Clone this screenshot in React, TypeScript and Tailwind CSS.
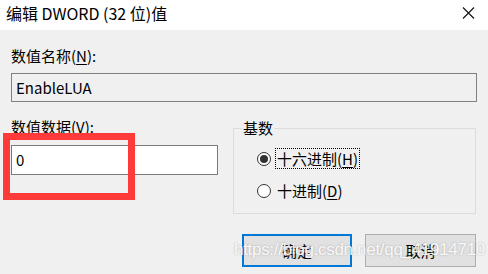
import React from "react";

const font = { fontFamily: '"Noto Sans CJK SC", "Noto Sans", sans-serif' };

export default function App() {
  return (
    <div
      className="relative w-[488px] h-[274px] overflow-hidden bg-[#f0f0f0] text-black font-['Noto_Sans_CJK_SC','Noto_Sans',sans-serif]"
    >
      {/* Title bar */}
      <div className="h-[30px] bg-white">
        <div className="h-[25px] flex items-center justify-between pl-[6px] pr-[13px]">
          <span className="text-[16px] leading-[20px]">编辑 DWORD (32 位)值</span>
          <svg width="13" height="12" viewBox="0 0 13 12" className="block">
            <path d="M1 0.5 L12 11.5 M12 0.5 L1 11.5" stroke="#111" strokeWidth="1.1" fill="none" />
          </svg>
        </div>
      </div>

      {/* Body */}
      <div className="px-[11px] pt-[16px]">
        <div className="text-[15px] leading-[20px]">
          数值名称(<span className="underline underline-offset-2">N</span>):
        </div>
        <div className="mt-[7px] h-[29px] w-[466px] border border-[#808080] bg-[#f0f0f0] flex items-center pl-[4px] text-[15px] leading-[20px]">
          EnableLUA
        </div>

        <div className="mt-[15px] flex">
          <div className="w-[207px]">
            <div className="text-[15px] leading-[20px]">
              数值数据(<span className="underline underline-offset-2">V</span>):
            </div>
            <div className="mt-[8px] h-[30px] border border-[#7a7a7a] bg-white flex items-center pl-[4px] text-[15px] leading-[20px]">
              0
            </div>
          </div>

          <fieldset className="ml-[15px] mt-[1px] w-[243px] h-[96px] border border-[#dcdcdc] px-[8px]">
            <legend className="px-[1px] text-[15px] leading-[20px]">基数</legend>
            <div className="pl-[15px] pt-[10px] flex flex-col gap-[11px]">
              <div className="flex items-center h-[21px]">
                <span className="w-[14px] h-[14px] rounded-full border border-[#333] bg-white flex items-center justify-center">
                  <span className="w-[8px] h-[8px] rounded-full bg-[#333]" />
                </span>
                <span className="ml-[4px] border border-dotted border-black px-[1px] text-[15px] leading-[19px]">
                  十六进制(<span className="underline underline-offset-2">H</span>)
                </span>
              </div>
              <div className="flex items-center h-[21px]">
                <span className="w-[14px] h-[14px] rounded-full border border-[#333] bg-white" />
                <span className="ml-[6px] text-[15px] leading-[19px]">
                  十进制(<span className="underline underline-offset-2">D</span>)
                </span>
              </div>
            </div>
          </fieldset>
        </div>

        <div className="mt-[20px] flex justify-end gap-[13px] pr-[1px]">
          <button className="w-[110px] h-[33px] border-2 border-[#0078d7] bg-[#e1e1e1] text-[15px] leading-[20px]" style={font}>
            确定
          </button>
          <button className="w-[111px] h-[33px] border border-[#adadad] bg-[#e1e1e1] text-[15px] leading-[20px]" style={font}>
            取消
          </button>
        </div>
      </div>

      {/* Red highlight annotation */}
      <div className="absolute left-[3px] top-[133px] w-[132px] h-[67px] border-[7px] border-[#ff3a3a]" />

      {/* Watermark */}
      <div className="absolute left-[234px] top-[238px] text-[17px] leading-[24px] text-white/90 font-['Liberation_Sans',Arial,sans-serif] tracking-[-0.3px] [text-shadow:0_0_2px_rgba(140,140,140,0.7)] pointer-events-none whitespace-nowrap">
        https://blog.csdn.net/qq_41914710
      </div>
    </div>
  );
}
